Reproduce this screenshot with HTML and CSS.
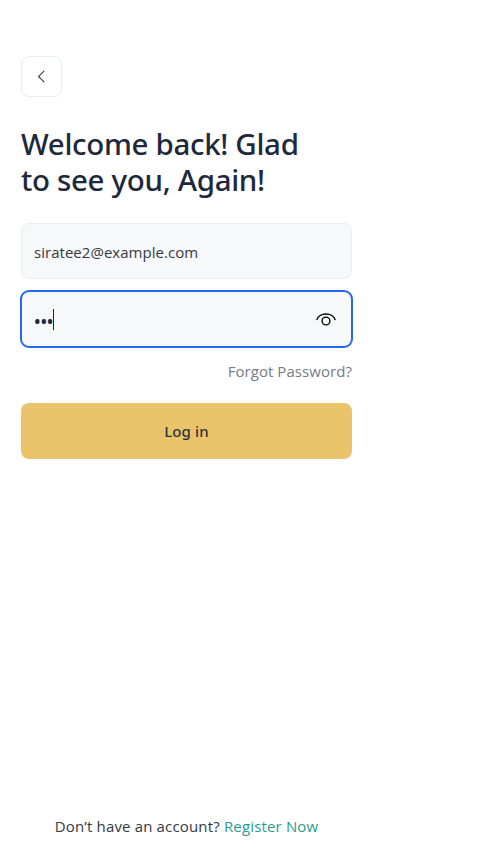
FILE: index.html
```html
<!DOCTYPE html>
<html lang="en">
<head>
<meta charset="utf-8">
<title>Log in</title>
<link rel="stylesheet" href="styles.css">
</head>
<body>
<main class="screen">
  <button class="back" type="button" aria-label="Back">
    <svg width="19" height="19" viewBox="0 0 19 19"><path d="M12.3 3.8 6.5 9.5l5.8 5.7"/></svg>
  </button>
  <h1 class="title">Welcome back! Glad<br>to see you, Again!</h1>
  <form class="form">
    <div class="field"><span class="email">siratee2@example.com</span></div>
    <div class="field focused">
      <span class="dots">•••</span><span class="caret"></span>
      <svg class="eye" width="22" height="22" viewBox="0 0 22 22"><path d="M1.7 11.2C3.4 2.9 18.6 2.9 20.3 11.2"/><circle cx="11" cy="12" r="3.9"/></svg>
    </div>
    <a class="forgot">Forgot Password?</a>
    <button class="login" type="button"><span>Log in</span></button>
  </form>
  <p class="signup"><span class="question">Don’t have an account?</span> <a class="register">Register Now</a></p>
</main>
</body>
</html>
```
FILE: styles.css
```css
* { box-sizing: border-box; }
body { margin: 0; background: #fff; color: #343943; font: 400 15px/20px "Open Sans", "Noto Sans", sans-serif; }
.screen { width: 373px; height: 864px; padding: 56px 21px 28px; display: flex; flex-direction: column; }
.back { width: 41px; height: 41px; padding: 0; border: 1px solid #e8ecf4; border-radius: 8px; background: #fff; display: flex; align-items: center; justify-content: center; }
.back svg { fill: none; stroke: #3a3f48; stroke-width: 1.1; }
.title { margin: 29px 0 0; font: 500 29.5px/36px "Noto Sans", sans-serif; letter-spacing: -0.33px; color: #1e293b; white-space: nowrap; }
.form { margin-top: 25px; display: flex; flex-direction: column; }
.field { height: 56px; padding: 1px 12px 0; border: 1px solid #e8ecf4; border-radius: 8px; background: #f7f8f9; display: flex; align-items: center; }
.email { letter-spacing: 0.03px; }
.focused { height: 58px; margin: 11px -1px 0; padding: 0 14px 0 12px; border: 2px solid #2168f5; border-radius: 9px; }
.dots { color: #1e293b; font-size: 17.5px; font-weight: 600; margin-top: 3px; width: 19px; letter-spacing: -0.2px; }
.caret { width: 1px; height: 21px; background: #1e232c; }
.eye { margin-left: auto; margin-top: 1px; fill: none; stroke: #000; stroke-width: 1.4; }
.forgot { align-self: flex-end; margin-top: 13px; color: #757b87; letter-spacing: 0.06px; }
.login { height: 56px; margin-top: 22px; border: 0; border-radius: 8px; background: #e9c46a; color: #2c3437; font: 500 15px/20px "Noto Sans", sans-serif; letter-spacing: 0.15px; }
.signup { margin: auto 0 0; text-align: center; white-space: nowrap; letter-spacing: 0.16px; }
.register { color: #2a9d8f; }
```
